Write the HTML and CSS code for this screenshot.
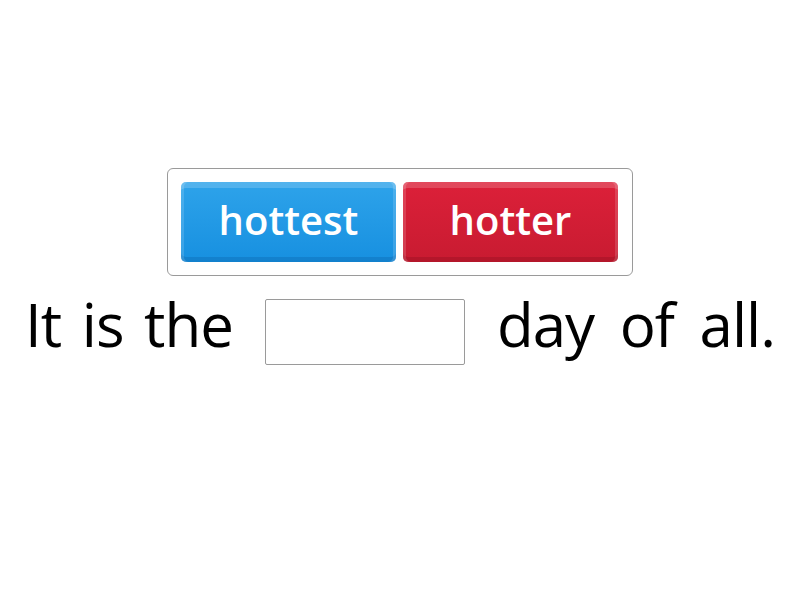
FILE: index.html
```html
<!DOCTYPE html>
<html>
<head>
<meta charset="utf-8">
<link rel="stylesheet" href="styles.css">
</head>
<body>
<div class="page">
  <div class="bank">
    <div class="tile blue"><span>hottest</span></div>
    <div class="tile red"><span>hotter</span></div>
  </div>
  <div class="sentence">
    <span class="word lead">It is the</span>
    <span class="blank"></span>
    <span class="word tail">day of all.</span>
  </div>
</div>
</body>
</html>
```
FILE: styles.css
```css
html, body {
  margin: 0;
  padding: 0;
  background: #ffffff;
  width: 800px;
  height: 600px;
  overflow: hidden;
  font-family: "Open Sans", "DejaVu Sans", sans-serif;
}
.page {
  display: flex;
  flex-direction: column;
  align-items: center;
  padding-top: 168px;
}
.bank {
  display: flex;
  gap: 7px;
  padding: 13px;
  border: 1px solid #9a9a9a;
  border-radius: 6px;
  box-sizing: border-box;
  width: 466px;
  height: 108px;
}
.tile {
  width: 215px;
  height: 80px;
  border-radius: 5px;
  box-sizing: border-box;
  display: flex;
  align-items: center;
  justify-content: center;
  color: #ffffff;
  font-weight: 600;
  font-size: 40px;
  padding-bottom: 6px;
}
.tile.blue {
  background: linear-gradient(#2ea3ea, #1790e0);
  box-shadow: inset 0 9px 0 -3px rgba(255,255,255,0.18), inset 3px 0 0 rgba(255,255,255,0.15), inset -3px 0 0 rgba(255,255,255,0.15), inset 0 -5px 0 rgba(0,60,120,0.18);
}
.tile.red {
  background: linear-gradient(#dc2039, #c81b31);
  box-shadow: inset 0 9px 0 -3px rgba(255,255,255,0.18), inset 3px 0 0 rgba(255,255,255,0.15), inset -3px 0 0 rgba(255,255,255,0.15), inset 0 -5px 0 rgba(90,0,10,0.18);
}
.sentence {
  display: flex;
  align-items: flex-start;
  gap: 32px;
  margin-top: 23px;
  font-size: 60px;
  color: #000;
  line-height: 66px;
  letter-spacing: -1px;
}
.word {
  display: block;
  white-space: nowrap;
  margin-top: -8px;
}
.word.lead {
  word-spacing: 6px;
}
.word.tail {
  word-spacing: 11px;
}
.blank {
  display: block;
  width: 200px;
  height: 66px;
  box-sizing: border-box;
  border: 1px solid #9a9a9a;
  border-radius: 2px;
}
```
